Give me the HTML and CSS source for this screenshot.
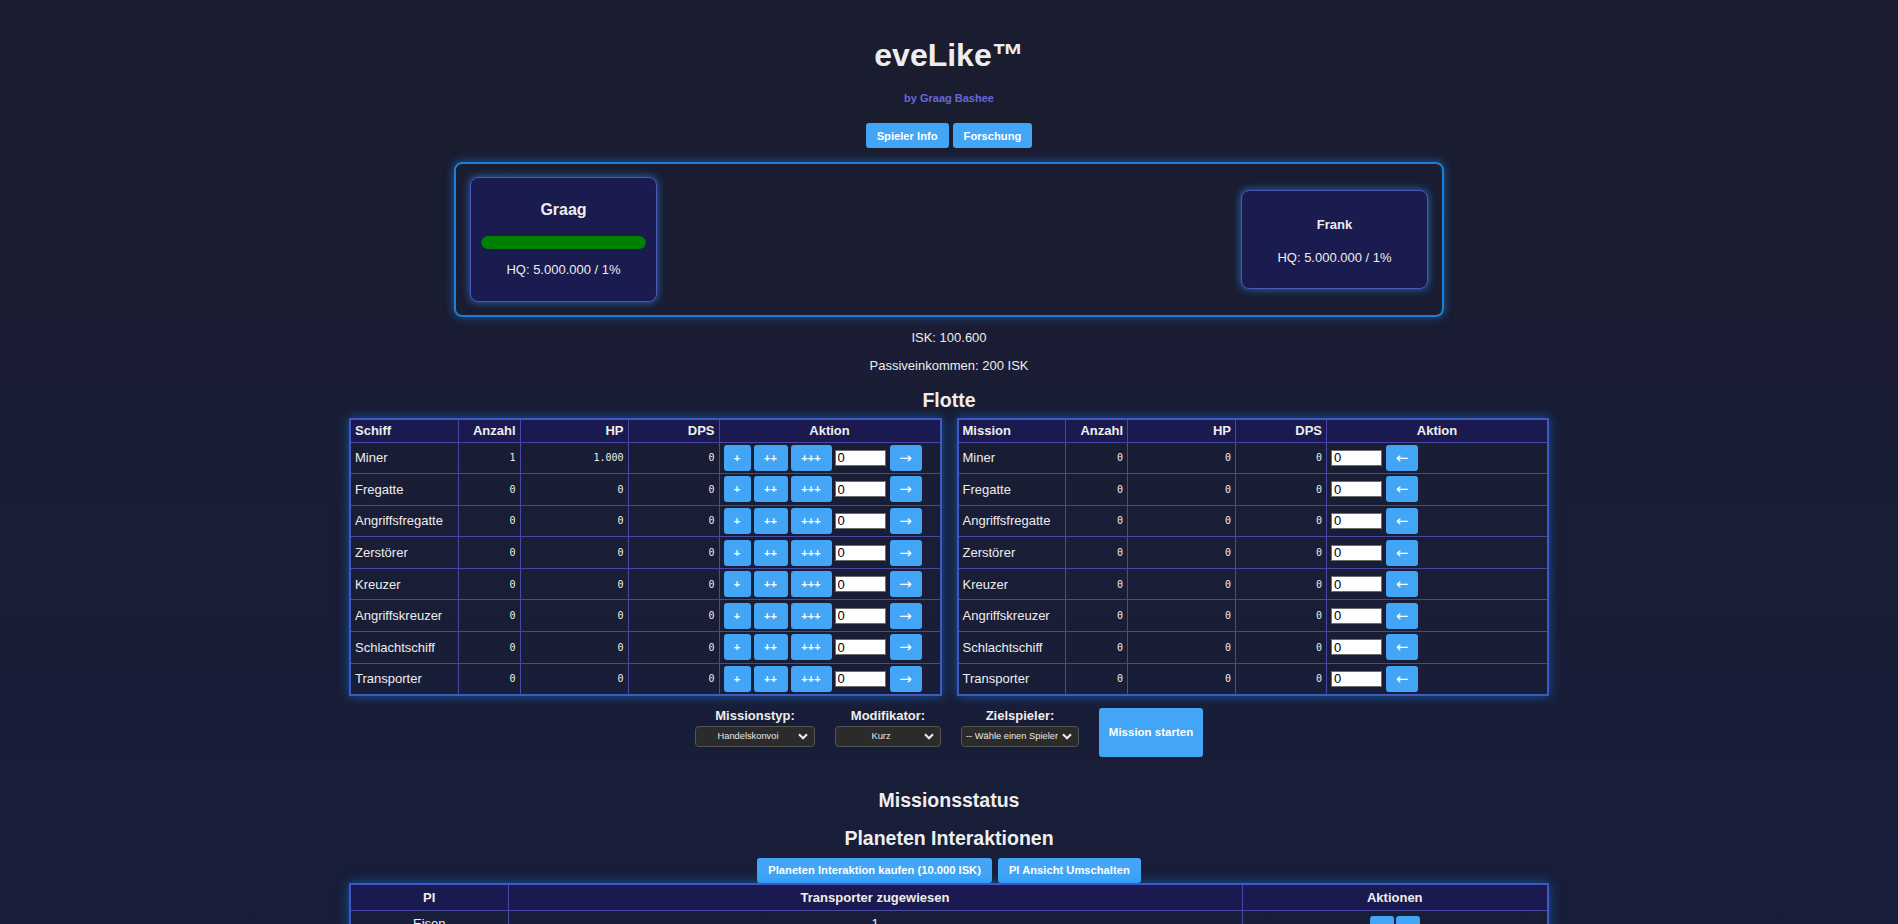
FILE: index.html
```html
<!DOCTYPE html>
<html lang="de">
<head>
<meta charset="utf-8">
<title>eveLike</title>
<link rel="stylesheet" href="styles.css">
</head>
<body>
<div class="app">
  <h1 class="title">eveLike™</h1>
  <p class="byline">by Graag Bashee</p>
  <div class="nav">
    <button class="btn">Spieler Info</button>
    <button class="btn">Forschung</button>
  </div>

  <div class="battle">
    <div class="card card-main">
      <div class="card-name">Graag</div>
      <div class="hpbar"><div class="hpfill" style="width:100%"></div></div>
      <div class="card-hq">HQ: 5.000.000 / 1%</div>
    </div>
    <div class="card card-enemy">
      <div class="card-name small">Frank</div>
      <div class="card-hq">HQ: 5.000.000 / 1%</div>
    </div>
  </div>

  <p class="stat">ISK: 100.600</p>
  <p class="stat">Passiveinkommen: 200 ISK</p>

  <h2 class="section flotte">Flotte</h2>

  <div class="fleet">
    <div class="tablewrap">
      <table class="grid">
        <colgroup><col class="c1"><col class="c2"><col class="c3"><col class="c4"><col></colgroup>
        <thead>
          <tr><th class="l">Schiff</th><th class="r">Anzahl</th><th class="r">HP</th><th class="r">DPS</th><th class="c">Aktion</th></tr>
        </thead>
        <tbody>
          <tr><td>Miner</td><td class="num">1</td><td class="num">1.000</td><td class="num">0</td><td><div class="acts"><button class="tb w1">+</button><button class="tb w2">++</button><button class="tb w3">+++</button><input class="amt" value="0"><button class="tb arrow">→</button></div></td></tr>
          <tr><td>Fregatte</td><td class="num">0</td><td class="num">0</td><td class="num">0</td><td><div class="acts"><button class="tb w1">+</button><button class="tb w2">++</button><button class="tb w3">+++</button><input class="amt" value="0"><button class="tb arrow">→</button></div></td></tr>
          <tr><td>Angriffsfregatte</td><td class="num">0</td><td class="num">0</td><td class="num">0</td><td><div class="acts"><button class="tb w1">+</button><button class="tb w2">++</button><button class="tb w3">+++</button><input class="amt" value="0"><button class="tb arrow">→</button></div></td></tr>
          <tr><td>Zerstörer</td><td class="num">0</td><td class="num">0</td><td class="num">0</td><td><div class="acts"><button class="tb w1">+</button><button class="tb w2">++</button><button class="tb w3">+++</button><input class="amt" value="0"><button class="tb arrow">→</button></div></td></tr>
          <tr><td>Kreuzer</td><td class="num">0</td><td class="num">0</td><td class="num">0</td><td><div class="acts"><button class="tb w1">+</button><button class="tb w2">++</button><button class="tb w3">+++</button><input class="amt" value="0"><button class="tb arrow">→</button></div></td></tr>
          <tr><td>Angriffskreuzer</td><td class="num">0</td><td class="num">0</td><td class="num">0</td><td><div class="acts"><button class="tb w1">+</button><button class="tb w2">++</button><button class="tb w3">+++</button><input class="amt" value="0"><button class="tb arrow">→</button></div></td></tr>
          <tr><td>Schlachtschiff</td><td class="num">0</td><td class="num">0</td><td class="num">0</td><td><div class="acts"><button class="tb w1">+</button><button class="tb w2">++</button><button class="tb w3">+++</button><input class="amt" value="0"><button class="tb arrow">→</button></div></td></tr>
          <tr><td>Transporter</td><td class="num">0</td><td class="num">0</td><td class="num">0</td><td><div class="acts"><button class="tb w1">+</button><button class="tb w2">++</button><button class="tb w3">+++</button><input class="amt" value="0"><button class="tb arrow">→</button></div></td></tr>
        </tbody>
      </table>
    </div>
    <div class="tablewrap">
      <table class="grid">
        <colgroup><col class="c1"><col class="c2"><col class="c3"><col class="c4"><col></colgroup>
        <thead>
          <tr><th class="l">Mission</th><th class="r">Anzahl</th><th class="r">HP</th><th class="r">DPS</th><th class="c">Aktion</th></tr>
        </thead>
        <tbody>
          <tr><td>Miner</td><td class="num">0</td><td class="num">0</td><td class="num">0</td><td><div class="acts"><input class="amt" value="0"><button class="tb arrow">←</button></div></td></tr>
          <tr><td>Fregatte</td><td class="num">0</td><td class="num">0</td><td class="num">0</td><td><div class="acts"><input class="amt" value="0"><button class="tb arrow">←</button></div></td></tr>
          <tr><td>Angriffsfregatte</td><td class="num">0</td><td class="num">0</td><td class="num">0</td><td><div class="acts"><input class="amt" value="0"><button class="tb arrow">←</button></div></td></tr>
          <tr><td>Zerstörer</td><td class="num">0</td><td class="num">0</td><td class="num">0</td><td><div class="acts"><input class="amt" value="0"><button class="tb arrow">←</button></div></td></tr>
          <tr><td>Kreuzer</td><td class="num">0</td><td class="num">0</td><td class="num">0</td><td><div class="acts"><input class="amt" value="0"><button class="tb arrow">←</button></div></td></tr>
          <tr><td>Angriffskreuzer</td><td class="num">0</td><td class="num">0</td><td class="num">0</td><td><div class="acts"><input class="amt" value="0"><button class="tb arrow">←</button></div></td></tr>
          <tr><td>Schlachtschiff</td><td class="num">0</td><td class="num">0</td><td class="num">0</td><td><div class="acts"><input class="amt" value="0"><button class="tb arrow">←</button></div></td></tr>
          <tr><td>Transporter</td><td class="num">0</td><td class="num">0</td><td class="num">0</td><td><div class="acts"><input class="amt" value="0"><button class="tb arrow">←</button></div></td></tr>
        </tbody>
      </table>
    </div>
  </div>

  <div class="controls">
    <div class="ctl">
      <label class="ctl-label">Missionstyp:</label>
      <select class="sel s1"><option>Handelskonvoi</option></select>
    </div>
    <div class="ctl">
      <label class="ctl-label">Modifikator:</label>
      <select class="sel s2"><option>Kurz</option></select>
    </div>
    <div class="ctl">
      <label class="ctl-label">Zielspieler:</label>
      <select class="sel s3"><option>-- Wähle einen Spieler --</option></select>
    </div>
    <button class="btn start">Mission starten</button>
  </div>

  <h2 class="section status">Missionsstatus</h2>
  <h2 class="section pi-title">Planeten Interaktionen</h2>
  <div class="nav pi-nav">
    <button class="btn">Planeten Interaktion kaufen (10.000 ISK)</button>
    <button class="btn">PI Ansicht Umschalten</button>
  </div>

  <table class="pi">
    <colgroup><col class="p1"><col class="p2"><col></colgroup>
    <thead>
      <tr><th>PI</th><th>Transporter zugewiesen</th><th>Aktionen</th></tr>
    </thead>
    <tbody>
      <tr><td>Eisen</td><td>1</td><td><div class="pi-acts"><button class="tb pa">-</button><button class="tb pa">+</button></div></td></tr>
    </tbody>
  </table>
</div>
</body>
</html>
```
FILE: styles.css
```css
html {
  background: linear-gradient(180deg, #1b1c2f 0%, #181e3a 100%) fixed;
  min-height: 100%;
}
body {
  margin: 0;
  color: #eeeeee;
  font-family: "Liberation Sans", Arial, sans-serif;
  font-size: 13px;
}
.app {
  display: flex;
  flex-direction: column;
  align-items: center;
}
.title {
  margin: 37px 0 0;
  font-size: 32px;
  line-height: 37px;
  font-weight: bold;
}
.byline {
  margin: 17px 0 0;
  font-size: 11px;
  line-height: 14px;
  font-weight: bold;
  color: #6767dc;
}
.nav {
  margin-top: 18px;
  display: flex;
  gap: 4px;
}
.btn {
  height: 25px;
  padding: 0 11px;
  border: 0;
  border-radius: 3px;
  background: #42a5f5;
  color: #fff;
  font-family: "Liberation Sans", Arial, sans-serif;
  font-size: 11.2px;
  font-weight: bold;
}
.battle {
  margin-top: 14px;
  width: 990px;
  box-sizing: border-box;
  border: 2px solid #1d7fd6;
  border-radius: 8px;
  box-shadow: 0 0 10px rgba(30, 144, 255, 0.55);
  padding: 13px 14px;
  display: flex;
  justify-content: space-between;
  align-items: center;
}
.card {
  width: 187px;
  box-sizing: border-box;
  background: #1a1b4f;
  border: 1px solid #4e56b8;
  border-radius: 8px;
  box-shadow: 0 0 8px rgba(40, 150, 255, 0.7);
  text-align: center;
  padding: 23px 10px;
}
.card-enemy {
  padding: 26px 10px 22px;
}
.card-name {
  font-size: 16px;
  line-height: 18px;
  font-weight: bold;
}
.card-name.small {
  font-size: 13px;
  line-height: 16px;
}
.hpbar {
  margin-top: 17px;
  height: 13px;
  border-radius: 7px;
  background: #0b3b0b;
  overflow: hidden;
}
.hpfill {
  height: 100%;
  background: #008000;
  border-radius: 7px;
}
.card-hq {
  margin-top: 13px;
  line-height: 16px;
}
.card-enemy .card-hq {
  margin-top: 17px;
}
.stat {
  margin: 13px 0 0;
  line-height: 15px;
}
.section {
  margin: 16px 0 0;
  font-size: 19.5px;
  line-height: 22px;
  font-weight: bold;
}
.fleet {
  margin-top: 7px;
  width: 1200px;
  display: flex;
  gap: 15px;
}
.tablewrap {
  flex: 1;
  min-width: 0;
}
.grid, .pi {
  width: 100%;
  table-layout: fixed;
  border-collapse: collapse;
  border: 2px solid #4356c4;
  box-shadow: 0 0 10px rgba(0, 140, 255, 0.55);
}
.c1 { width: 108px; }
.c2 { width: 62px; }
.c3 { width: 108px; }
.c4 { width: 91px; }
.grid th {
  background: #1a1a50;
  font-weight: bold;
  height: 23px;
  box-sizing: border-box;
  padding: 0 4px;
  border: 1px solid #4747a6;
  line-height: 15px;
}
.grid td {
  height: 31.6px;
  box-sizing: border-box;
  padding: 0 4px;
  border: 1px solid #4747a6;
  line-height: 15px;
  white-space: nowrap;
}
.l { text-align: left; }
.r { text-align: right; }
.c { text-align: center; }
.grid td.num {
  text-align: right;
  font-family: "DejaVu Sans Mono", monospace;
  font-size: 10px;
}
.acts {
  display: flex;
  align-items: center;
  gap: 3px;
}
.tb {
  height: 26px;
  padding: 0;
  border: 0;
  border-radius: 3px;
  background: #42a5f5;
  color: #fff;
  font-family: "Liberation Sans", Arial, sans-serif;
  font-size: 11px;
  font-weight: bold;
}
.w1 { width: 27px; }
.w2 { width: 34px; }
.w3 { width: 41px; }
.arrow {
  width: 32px;
  margin-left: 1px;
  font-family: "DejaVu Sans", sans-serif;
  font-weight: normal;
  font-size: 15px;
}
.amt {
  width: 51px;
  height: 16px;
  box-sizing: border-box;
  margin: 0;
  padding: 0 2px;
  border: 1px solid #6d6d6d;
  background: #fff;
  color: #000;
  font-family: "Liberation Sans", Arial, sans-serif;
  font-size: 13px;
}
.controls {
  margin-top: 12px;
  display: flex;
  justify-content: center;
  align-items: flex-start;
  gap: 20px;
}
.ctl {
  display: flex;
  flex-direction: column;
  align-items: center;
  gap: 3px;
}
.ctl-label {
  font-weight: bold;
  line-height: 15px;
}
.sel {
  -webkit-appearance: none;
  appearance: none;
  height: 21px;
  box-sizing: border-box;
  padding: 0 20px 0 6px;
  background-color: #2b2b2b;
  background-image: url("data:image/svg+xml;utf8,<svg xmlns='http://www.w3.org/2000/svg' width='10' height='7' viewBox='0 0 10 7'><path d='M1 1.2 L5 5.2 L9 1.2' fill='none' stroke='%23e8e8e8' stroke-width='2.2'/></svg>");
  background-repeat: no-repeat;
  background-position: right 6px center;
  background-size: 10px 7px;
  color: #e8e8e8;
  border: 1px solid #555;
  border-radius: 4px;
  font-family: "Liberation Sans", Arial, sans-serif;
  font-size: 9.3px;
  text-align: center;
  text-align-last: center;
}
.s1 { width: 120px; }
.s2 { width: 106px; }
.s3 { width: 118px; padding-left: 4px; text-align: left; text-align-last: left; }
.start {
  height: 49px;
  width: 104px;
  padding: 0;
  font-size: 11.5px;
}
.status {
  margin-top: 32px;
}
.pi-nav {
  margin-top: 9px;
  gap: 6px;
}
.pi {
  width: 1200px;
}
.p1 { width: 158px; }
.p2 { width: 734px; }
.pi th {
  background: #1a1a50;
  height: 27px;
  box-sizing: border-box;
  padding: 0 4px;
  border: 1px solid #4747a6;
  text-align: center;
  font-weight: bold;
}
.pi td {
  height: 36px;
  box-sizing: border-box;
  padding: 5px 4px;
  vertical-align: top;
  line-height: 15px;
  text-align: center;
  border: 1px solid #4747a6;
}
.pi-acts {
  display: flex;
  justify-content: center;
  gap: 2px;
}
.pa {
  width: 24px;
}
```
